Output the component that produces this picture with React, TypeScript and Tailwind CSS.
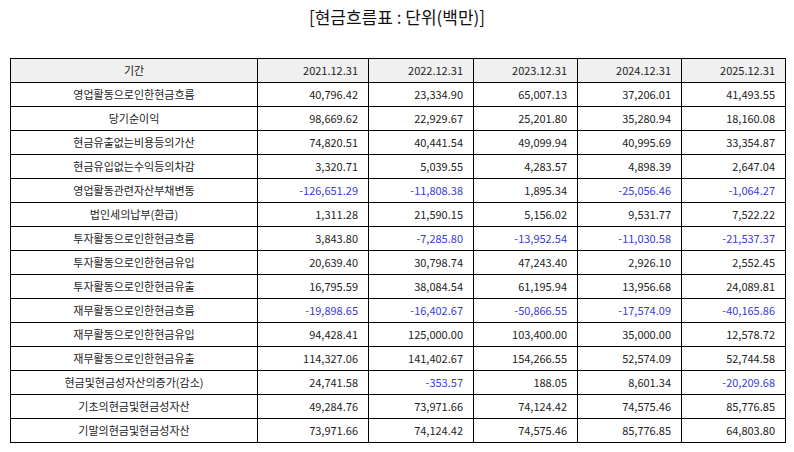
import React from 'react';

type Row = { label: string; values: string[] };

const YEARS = ['2021.12.31', '2022.12.31', '2023.12.31', '2024.12.31', '2025.12.31'];

const ROWS: Row[] = [
  { label: '영업활동으로인한현금흐름', values: ['40,796.42', '23,334.90', '65,007.13', '37,206.01', '41,493.55'] },
  { label: '당기순이익', values: ['98,669.62', '22,929.67', '25,201.80', '35,280.94', '18,160.08'] },
  { label: '현금유출없는비용등의가산', values: ['74,820.51', '40,441.54', '49,099.94', '40,995.69', '33,354.87'] },
  { label: '현금유입없는수익등의차감', values: ['3,320.71', '5,039.55', '4,283.57', '4,898.39', '2,647.04'] },
  { label: '영업활동관련자산부채변동', values: ['-126,651.29', '-11,808.38', '1,895.34', '-25,056.46', '-1,064.27'] },
  { label: '법인세의납부(환급)', values: ['1,311.28', '21,590.15', '5,156.02', '9,531.77', '7,522.22'] },
  { label: '투자활동으로인한현금흐름', values: ['3,843.80', '-7,285.80', '-13,952.54', '-11,030.58', '-21,537.37'] },
  { label: '투자활동으로인한현금유입', values: ['20,639.40', '30,798.74', '47,243.40', '2,926.10', '2,552.45'] },
  { label: '투자활동으로인한현금유출', values: ['16,795.59', '38,084.54', '61,195.94', '13,956.68', '24,089.81'] },
  { label: '재무활동으로인한현금흐름', values: ['-19,898.65', '-16,402.67', '-50,866.55', '-17,574.09', '-40,165.86'] },
  { label: '재무활동으로인한현금유입', values: ['94,428.41', '125,000.00', '103,400.00', '35,000.00', '12,578.72'] },
  { label: '재무활동으로인한현금유출', values: ['114,327.06', '141,402.67', '154,266.55', '52,574.09', '52,744.58'] },
  { label: '현금및현금성자산의증가(감소)', values: ['24,741.58', '-353.57', '188.05', '8,601.34', '-20,209.68'] },
  { label: '기초의현금및현금성자산', values: ['49,284.76', '73,971.66', '74,124.42', '74,575.46', '85,776.85'] },
  { label: '기말의현금및현금성자산', values: ['73,971.66', '74,124.42', '74,575.46', '85,776.85', '64,803.80'] },
];

const cell = 'border border-black h-[24px] p-0 leading-none';

export default function App() {
  return (
    <div
      className="w-[794px] h-[452px] bg-white text-[#222] px-[10px]"
      style={{ fontFamily: '"Noto Sans CJK KR", "Noto Sans", sans-serif' }}
    >
      {/* Title */}
      <div className="h-[58px] pt-[5px] text-center text-[17px] text-[#111] leading-[24px]">
        [현금흐름표 : 단위(백만)]
      </div>

      <table className="w-[775px] table-fixed border-collapse text-[11px]">
        <colgroup>
          <col className="w-[247px]" />
          <col className="w-[111px]" />
          <col className="w-[105px]" />
          <col className="w-[104px]" />
          <col className="w-[104px]" />
          <col className="w-[104px]" />
        </colgroup>
        <thead>
          <tr className="bg-[#f0f0f0]">
            <th className={`${cell} font-normal text-center`}>기간</th>
            {YEARS.map(y => (
              <th key={y} className={`${cell} font-normal text-right pr-[10px]`}>
                {y}
              </th>
            ))}
          </tr>
        </thead>
        <tbody>
          {ROWS.map(row => (
            <tr key={row.label}>
              <td className={`${cell} text-center`}>{row.label}</td>
              {row.values.map((v, i) => (
                <td
                  key={i}
                  className={`${cell} text-right pr-[10px] ${v.startsWith('-') ? 'text-[#3a3ad6]' : ''}`}
                >
                  {v}
                </td>
              ))}
            </tr>
          ))}
        </tbody>
      </table>
    </div>
  );
}
